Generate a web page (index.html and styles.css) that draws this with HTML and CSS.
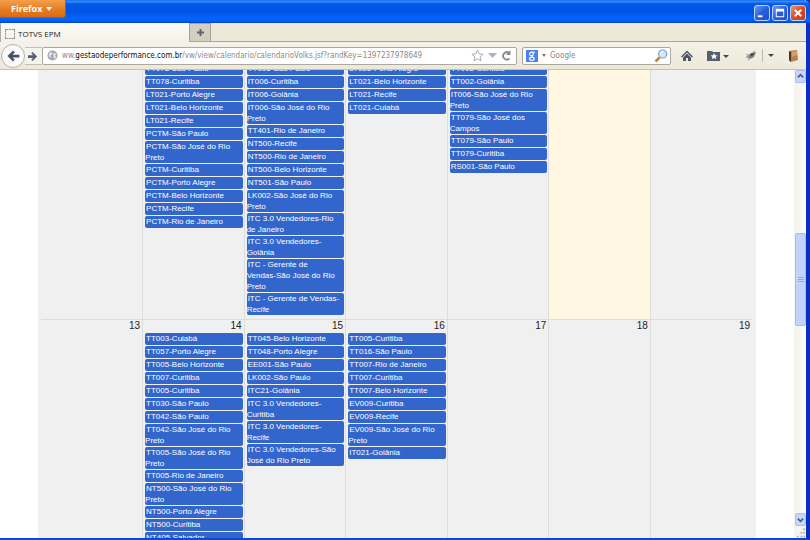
FILE: index.html
```html
<!DOCTYPE html>
<html lang="pt-BR">
<head>
<meta charset="utf-8">
<title>TOTVS EPM</title>
<link rel="stylesheet" href="styles.css">
</head>
<body>
<div class="window">
  <header class="titlebar">
    <button class="firefox">Firefox <span class="caret"></span></button>
    <div class="controls">
      <button class="ctl" aria-label="Minimizar"><svg viewBox="0 0 15 15"><path d="M3 10h5v2H3z" fill="#fff"/></svg></button>
      <button class="ctl" aria-label="Maximizar"><svg viewBox="0 0 15 15"><path d="M3 3h9v9H3zM4 6v5h7V6z" fill="#fff" fill-rule="evenodd"/></svg></button>
      <button class="ctl close" aria-label="Fechar"><svg viewBox="0 0 15 15"><path d="M4 4l7 7M11 4l-7 7" stroke="#fff" stroke-width="2"/></svg></button>
    </div>
  </header>
  <div class="tabs">
    <div class="tab"><span class="favicon"></span>TOTVS EPM</div>
    <button class="newtab" aria-label="Nova aba"><svg viewBox="0 0 9 9"><path d="M3.500 1h2v2.500H8v2H5.500V8h-2V5.500H1v-2h2.500z" fill="#5b6470"/></svg></button>
  </div>
  <nav class="toolbar">
    <button class="back" aria-label="Voltar"><svg viewBox="0 0 24 24"><path d="M12 6L6 12l6 6 2-2-2.500-2.500H19v-3h-7.500L14 8z" fill="#455261"/></svg></button>
    <button class="forward" aria-label="Avançar"><svg viewBox="0 0 12 12"><path d="M5 1l5 5-5 5-1.500-1.500L5.500 7.500H0v-3h5.500l-2-2z" fill="#556270"/></svg></button>
    <div class="urlbar">
      <svg class="globe" viewBox="0 0 12 12"><circle cx="6" cy="6" r="5.500" fill="#a4a7aa"/><path d="M2 4l3-2 1 2-2 2 1 3-3-2zM7 3l3 1-1 2 1 2-2 2-1-3z" fill="#e4e5e6"/></svg>
      <label for="url"><span>ww.</span><b>gestaodeperformance.com.br</b></label>
      <input id="url" type="text" value="/vw/view/calendario/calendarioVolks.jsf?randKey=1397237978649">
      <button class="icon" aria-label="Favoritar"><svg width="13" height="13" viewBox="0 0 13 13"><path d="M6.500 1l1.600 3.800 4 .4-3 2.700.9 4-3.500-2.100-3.500 2.100.9-4-3-2.700 4-.4z" fill="#fff" stroke="#a9acb2"/></svg></button>
      <button class="icon" aria-label="Histórico"><svg width="9" height="7" viewBox="0 0 9 7"><path d="M0 1h9L4.500 6z" fill="#a9b3c4"/></svg></button>
      <button class="icon" aria-label="Recarregar"><svg width="11" height="11" viewBox="0 0 11 11"><path d="M8.500 8.500A3.700 3.700 0 1 1 8 2.800" fill="none" stroke="#868a90" stroke-width="1.800"/><path d="M9.500 0v5H5z" fill="#868a90"/></svg></button>
    </div>
    <div class="search">
      <svg width="12" height="12" viewBox="0 0 12 12"><path d="M0 0h12v12H0z" fill="#4a83ee"/><circle cx="5.500" cy="4" r="1.800" fill="none" stroke="#fff" stroke-width="1.200"/><path d="M6 2.200h3M5.500 6.200l1.500 1.300" stroke="#fff"/><ellipse cx="5.800" cy="8.800" rx="2.300" ry="1.600" fill="none" stroke="#fff" stroke-width="1.200"/></svg>
      <svg width="4" height="3" viewBox="0 0 4 3"><path d="M0 0h4L2 3z" fill="#777"/></svg>
      <input type="text" aria-label="Pesquisar" placeholder="Google">
      <svg width="14" height="14" viewBox="0 0 14 14"><path d="M1.500 12.500l4-4" stroke="#c6803c" stroke-width="2.500"/><circle cx="8.700" cy="5" r="4" fill="#d3e9fb" stroke="#7aa0d0" stroke-width="1.200"/><path d="M6.500 4.500a2.500 2.500 0 0 1 3-2" stroke="#fff" fill="none"/></svg>
    </div>
    <div class="tools">
      <button class="icon" aria-label="Início"><svg width="12" height="12" viewBox="0 0 12 12"><path d="M6 .5l6 6-1 1-5-5-5 5-1-1zM2 7.500l4-4 4 4V11H7V8H5v3H2z" fill="#4b5764"/></svg></button>
      <button class="icon" aria-label="Marcadores"><svg width="22" height="12" viewBox="0 0 22 12"><path d="M0 1h5l1 1h7v9H0z" fill="#53606d"/><path d="M7 3l1 2.200 2.500.2-1.900 1.500.6 2.300L7 8 4.800 9.200l.6-2.300-1.900-1.500L6 5.200z" fill="#fff"/><path d="M16 5h6l-3 3z" fill="#444"/></svg></button>
      <button class="icon addon" aria-label="Complemento"><svg width="12" height="12" viewBox="0 0 12 12"><path d="M2 6l4-3 5-1-2 5-4 2z" fill="#777b7e"/><path d="M1 4l3 2-3 1 3 1-1 2 3-2M8 2l2-1" fill="none" stroke="#a4a6a7"/><path d="M6 4l3-1-1 2-2 1z" fill="#333"/></svg></button>
      <button class="icon split" aria-label="Opções"><svg width="6" height="3" viewBox="0 0 6 3"><path d="M0 0h6L3 3z" fill="#444"/></svg></button>
      <button class="icon" aria-label="Caderno"><svg width="11" height="12" viewBox="0 0 11 12"><path d="M1 1l8-1 1 10-7 2-2-2z" fill="#b98249"/><path d="M1 1l2 1v10l-2-2z" fill="#4d3524"/><path d="M4 2l5-1v4L4 7z" fill="#d5a168"/></svg></button>
    </div>
  </nav>
  <div class="viewport">
    <main class="page">
      <table class="calendar">
        <tbody>
        <tr>
          <td></td>
          <td><div class="events">
            <div>TT078-São Paulo</div><div>TT078-Curitiba</div><div>LT021-Porto Alegre</div><div>LT021-Belo Horizonte</div><div>LT021-Recife</div><div>PCTM-São Paulo</div><div>PCTM-São José do Rio<br>Preto</div><div>PCTM-Curitiba</div><div>PCTM-Porto Alegre</div><div>PCTM-Belo Horizonte</div><div>PCTM-Recife</div><div>PCTM-Rio de Janeiro</div>
          </div></td>
          <td><div class="events">
            <div>TT005-São Paulo</div><div>IT006-Curitiba</div><div>IT006-Goiânia</div><div>IT006-São José do Rio<br>Preto</div><div>TT401-Rio de Janeiro</div><div>NT500-Recife</div><div>NT500-Rio de Janeiro</div><div>NT500-Belo Horizonte</div><div>NT501-São Paulo</div><div>LK002-São José do Rio<br>Preto</div><div>ITC 3.0 Vendedores-Rio<br>de Janeiro</div><div>ITC 3.0 Vendedores-<br>Goiânia</div><div>ITC - Gerente de<br>Vendas-São José do Rio<br>Preto</div><div>ITC - Gerente de Vendas-<br>Recife</div>
          </div></td>
          <td><div class="events">
            <div>LT021-Porto Alegre</div><div>LT021-Belo Horizonte</div><div>LT021-Recife</div><div>LT021-Cuiabá</div>
          </div></td>
          <td><div class="events">
            <div>TT002-Curitiba</div><div>TT002-Goiânia</div><div>IT006-São José do Rio<br>Preto</div><div>TT079-São José dos<br>Campos</div><div>TT079-São Paulo</div><div>TT079-Curitiba</div><div>RS001-São Paulo</div>
          </div></td>
          <td class="today"></td>
          <td></td>
        </tr>
        <tr>
          <td><time>13</time></td>
          <td><time>14</time><div class="events">
            <div>TT003-Cuiabá</div><div>TT057-Porto Alegre</div><div>TT005-Belo Horizonte</div><div>TT007-Curitiba</div><div>TT005-Curitiba</div><div>TT030-São Paulo</div><div>TT042-São Paulo</div><div>TT042-São José do Rio<br>Preto</div><div>TT005-São José do Rio<br>Preto</div><div>TT005-Rio de Janeiro</div><div>NT500-São José do Rio<br>Preto</div><div>NT500-Porto Alegre</div><div>NT500-Curitiba</div><div>NT405-Salvador</div>
          </div></td>
          <td><time>15</time><div class="events">
            <div>TT045-Belo Horizonte</div><div>TT048-Porto Alegre</div><div>EE001-São Paulo</div><div>LK002-São Paulo</div><div>ITC21-Goiânia</div><div>ITC 3.0 Vendedores-<br>Curitiba</div><div>ITC 3.0 Vendedores-<br>Recife</div><div>ITC 3.0 Vendedores-São<br>José do Rio Preto</div>
          </div></td>
          <td><time>16</time><div class="events">
            <div>TT005-Curitiba</div><div>TT016-São Paulo</div><div>TT007-Rio de Janeiro</div><div>TT007-Curitiba</div><div>TT007-Belo Horizonte</div><div>EV009-Curitiba</div><div>EV009-Recife</div><div>EV009-São José do Rio<br>Preto</div><div>IT021-Goiânia</div>
          </div></td>
          <td><time>17</time></td>
          <td><time>18</time></td>
          <td><time>19</time></td>
        </tr>
        </tbody>
      </table>
    </main>
    <div class="scrollbar">
      <button class="arrow" aria-label="Rolar para cima"><svg viewBox="0 0 10 10"><path d="M2 6l3-3 3 3" fill="none" stroke="#4d6185" stroke-width="2"/></svg></button>
      <div class="track"><div class="thumb"><i></i><i></i><i></i></div></div>
      <button class="arrow" aria-label="Rolar para baixo"><svg viewBox="0 0 10 10"><path d="M2 4l3 3 3-3" fill="none" stroke="#4d6185" stroke-width="2"/></svg></button>
      <svg class="grip" viewBox="0 0 12 12"><path d="M9 2h2v2H9zM6 6h2v2H6zM9 6h2v2H9zM2 10h2v2H2zM6 10h2v2H6zM9 10h2v2H9z" fill="#b8b5ac"/></svg>
    </div>
  </div>
</div>
</body>
</html>
```
FILE: styles.css
```css
* { box-sizing: border-box; }
html, body { height: 100%; margin: 0; }
body { font-family: "Liberation Sans", Arial, sans-serif; overflow: hidden; background: #fff; }
button { padding: 0; border: 0; background: none; font: inherit; }
svg { display: block; }

.window {
  display: flex; flex-direction: column; height: 100vh;
  border-right: 4px solid #0a2fc4; border-bottom: 2px solid #0a48dc;
}

/* Title bar */
.titlebar {
  display: flex; justify-content: space-between; align-items: flex-start;
  flex: none; height: 23px; margin-right: -4px; padding-right: 4px;
  border-radius: 0 6px 0 0;
  background: linear-gradient(#0a55dc 0, #3a94ff 1px, #0458e8 4px, #0054e4 12px, #0463fb 18px, #0360f4 21px, #0042cc 23px);
}
.firefox {
  display: flex; align-items: center; gap: 4px; height: 18px; padding: 0 13px 0 11px;
  border: 1px solid #a95a1c; border-top: 0; border-left: 0; border-radius: 0 0 3px 0;
  background: linear-gradient(#f3a04c, #e47a20 60%, #d96c14);
  color: #fff; font: bold 9px "Open Sans", sans-serif;
}
.caret { border: 3px solid transparent; border-top: 4px solid #fff; border-bottom: 0; }
.controls { display: flex; gap: 2px; padding-top: 5px; }
.ctl {
  width: 16px; height: 16px; border: 1px solid #c4d4f6; border-radius: 3px;
  background: linear-gradient(135deg, #6c96f2, #2a5ee0 50%, #1c4ccc);
}
.ctl.close { background: linear-gradient(135deg, #f09070, #dc4a24 50%, #c43c18); }

/* Tabs */
.tabs {
  display: flex; flex: none; height: 19px; border-bottom: 1px solid #a9a798;
  background: #ece9d8;
}
.tab {
  display: flex; align-items: center; gap: 3px; width: 189px; height: 19px; padding: 2px 0 0 4px;
  background: linear-gradient(#fbfaf6, #f4f2ea);
  border-left: 1px solid #aaa; color: #222; font: 8px "Open Sans", sans-serif;
}
.favicon { width: 10px; height: 10px; border: 1px dashed #999; }
.newtab {
  display: grid; place-items: center; width: 22px; height: 18px;
  border: 1px solid #a5a398; border-bottom: 0; background: #d2cfc1;
}
.newtab svg { width: 9px; height: 9px; }

/* Navigation toolbar */
.toolbar {
  display: flex; align-items: center; flex: none; height: 28px; padding: 0 7px 0 1px;
  border-bottom: 1px solid #c5c2b2;
  background: linear-gradient(#f4f2ea, #ece9d8);
}
.back {
  z-index: 1; width: 24px; height: 24px; border: 1px solid #b3b1a8; border-radius: 50%; background: #fbfaf8;
}
.forward { width: 17px; height: 18px; padding: 3px; border: 1px solid #c1bfb6; border-width: 1px 0; background: #f5f3ee; }
.urlbar, .search {
  display: flex; align-items: center; height: 18px;
  border: 1px solid #aaa89f; border-radius: 2px; background: #fff;
  font: 8px "DejaVu Sans Condensed", "DejaVu Sans", sans-serif; color: #8a8a8a;
}
.urlbar { flex: 1; gap: 4px; padding: 0 4px; }
.urlbar label { display: flex; margin-right: -4px; }
.urlbar b { font-weight: normal; color: #111; }
.globe { flex: none; width: 11px; height: 11px; }
.toolbar input {
  flex: 1; min-width: 0; padding: 0; border: 0; outline: 0; background: none; font: inherit; color: inherit;
}
.toolbar input::placeholder { color: #888; opacity: 1; }
.search { width: 149px; gap: 4px; margin-left: 5px; padding: 0 2px 0 3px; }
.icon { flex: none; }
.tools { display: flex; align-items: center; gap: 14px; padding-left: 10px; }
.tools .addon { margin-left: 2px; }
.tools .split { height: 13px; margin-left: -9px; padding-left: 5px; border-left: 1px solid #bbb9b0; }

/* Page */
.viewport { display: flex; flex: 1; min-height: 0; }
.page { flex: 1; margin: 0 38px; padding: 0 4px 0 3px; overflow: hidden; background: #f0f0f0; }
.calendar { width: 100%; margin-top: -7px; border-collapse: collapse; table-layout: fixed; }
.calendar td { height: 256px; padding: 0 1px 0 2px; vertical-align: top; border-left: 1px solid #ddd; }
.calendar td:first-child { border-left: 0; }
.calendar tr + tr td { border-top: 1px solid #ddd; }
.calendar .today { background: #fff7e2; }
.calendar time {
  display: block; height: 13px; padding-right: 1px;
  font-size: 10px; line-height: 11px; text-align: right; color: #222;
}
.events { display: flex; flex-direction: column; gap: 1px; }
.events div {
  min-height: 12px; border-radius: 2px; background: #3366cc;
  color: #fff; font-size: 8px; line-height: 11px; text-indent: 1px; white-space: nowrap;
}

/* Scrollbar */
.scrollbar { display: flex; flex-direction: column; width: 12px; padding-left: 1px; background: #f5f4ef; }
.arrow { flex: none; height: 13px; border: 1px solid #a9c0f0; border-radius: 2px; background: #c4d6fc; }
.track { flex: 1; padding-top: 150px; background: linear-gradient(90deg, #f3f2ec, #fefefb); }
.thumb {
  display: flex; flex-direction: column; align-items: center; justify-content: center; gap: 1px;
  height: 93px; border: 1px solid #a3bcf2; border-radius: 2px; background: #c2d3fc;
}
.thumb i { width: 6px; height: 1px; background: #8caaee; }
.grip { flex: none; width: 11px; height: 12px; }
```
